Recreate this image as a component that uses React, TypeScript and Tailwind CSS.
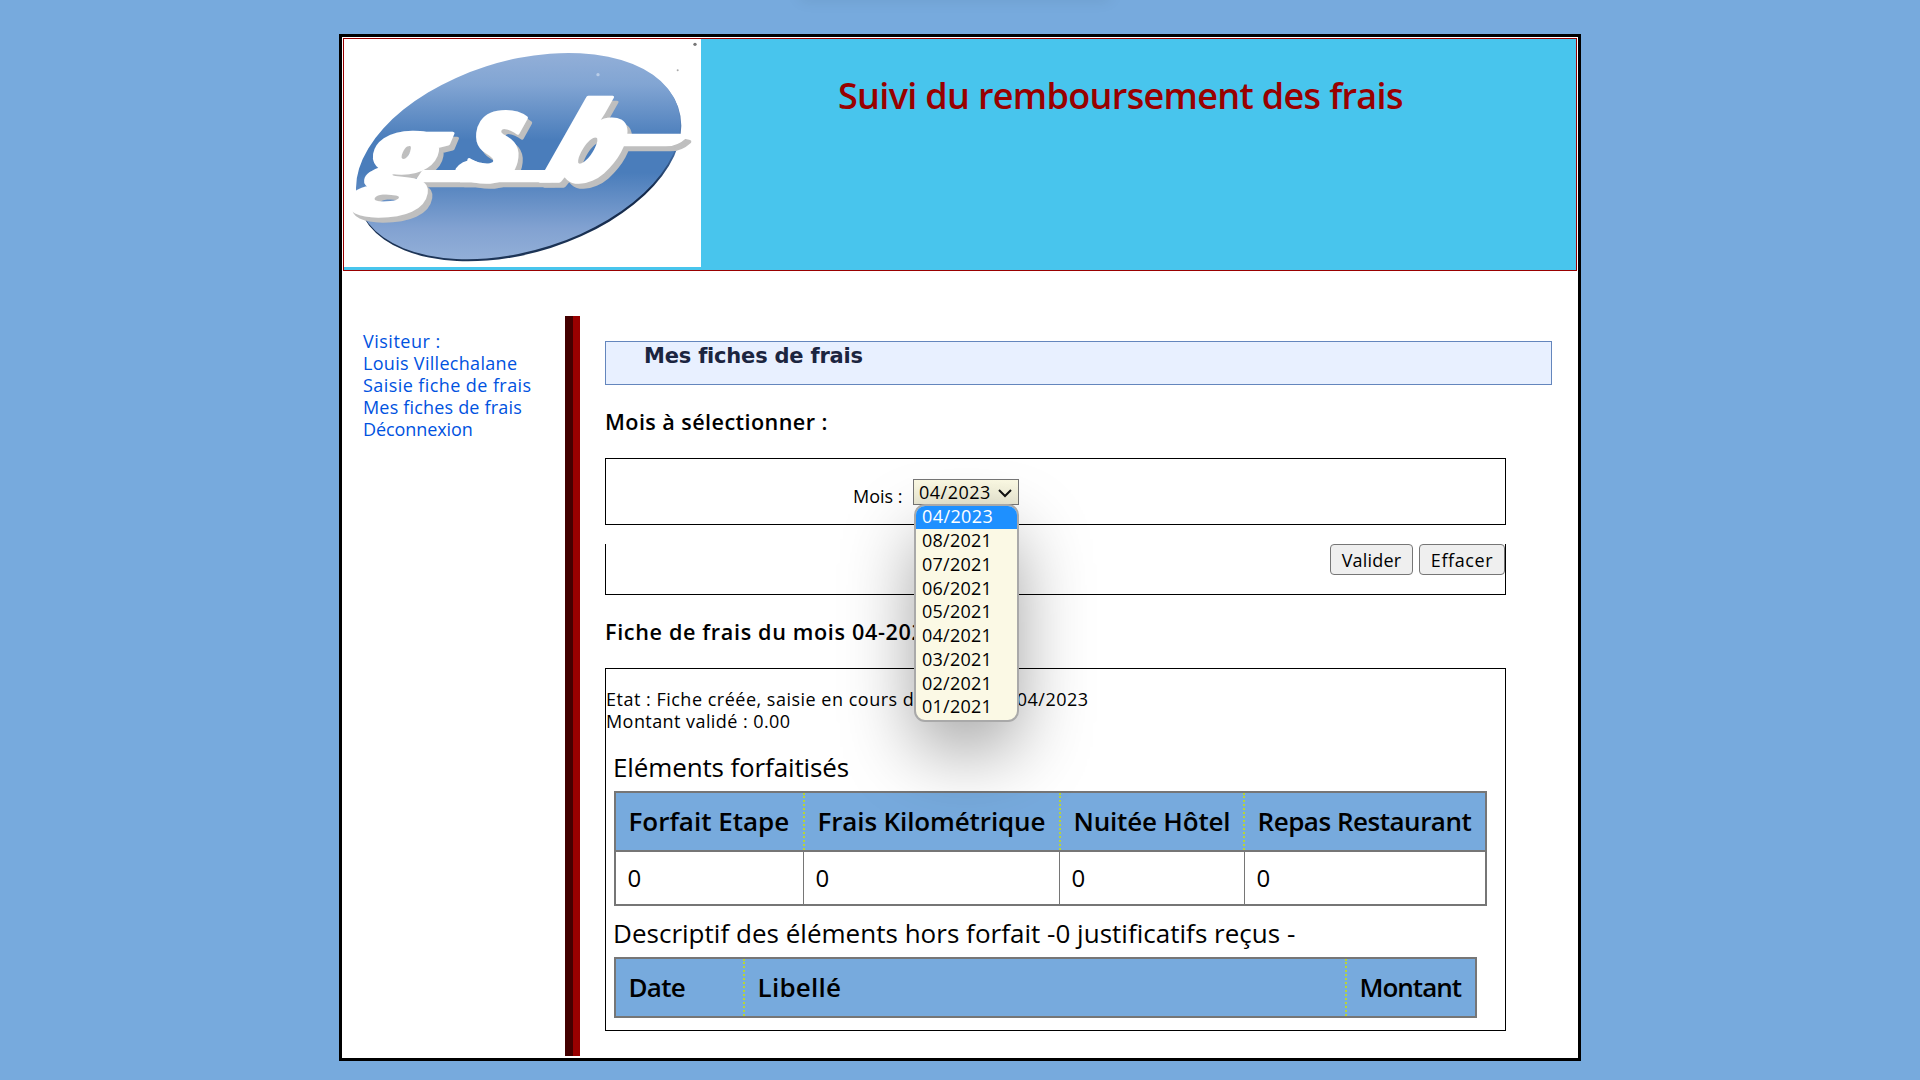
const months = [
  "04/2023",
  "08/2021",
  "07/2021",
  "06/2021",
  "05/2021",
  "04/2021",
  "03/2021",
  "02/2021",
  "01/2021",
];

const links = [
  { label: "Visiteur :", tracking: "tracking-[0.5px]" },
  { label: "Louis Villechalane", tracking: "tracking-[0.3px]" },
  { label: "Saisie fiche de frais", tracking: "tracking-[0.42px]" },
  { label: "Mes fiches de frais", tracking: "tracking-[0.18px]" },
  { label: "Déconnexion", tracking: "tracking-[-0.08px]" },
];

const forfait = [
  { label: "Forfait Etape", tracking: "tracking-[0px]" },
  { label: "Frais Kilométrique", tracking: "tracking-[-0.12px]" },
  { label: "Nuitée Hôtel", tracking: "tracking-[-0.18px]" },
  { label: "Repas Restaurant", tracking: "tracking-[-0.48px]" },
];

const horsForfait = [
  { label: "Date", tracking: "tracking-[-0.7px]" },
  { label: "Libellé", tracking: "tracking-[0.25px]" },
  { label: "Montant", tracking: "tracking-[-1px]" },
];

function LogoLetters({ color }: { color: string }) {
  return (
    <g
      fill={color}
      stroke={color}
      strokeWidth="10"
      strokeLinejoin="round"
      fontFamily="'Open Sans', sans-serif"
      fontWeight="800"
      fontStyle="italic"
    >
      <text transform="translate(88 512) skewX(-9) scale(1.32 1)" fontSize="312">g</text>
      <text transform="translate(405 482) skewX(-6) scale(0.92 1)" fontSize="370">s</text>
      <text transform="translate(628 482) skewX(-18) scale(1.15 1)" fontSize="330">b</text>
      <path d="M280 455H660V482H262Z" />
      <path d="M392 482Q372 468 382 448Q400 424 430 426Q455 436 490 460V482Z" />
      <path d="M820 346H1050L1066 350Q1040 374 1008 374H840Z" />
    </g>
  );
}

function Logo() {
  const oval = "M80 508A501.5 286 -16.9 1 1 1054 314A501.5 286 -16.9 1 1 80 508Z";
  return (
    <svg className="block h-[228px] w-[357px] bg-white" viewBox="42 57 1071 684" preserveAspectRatio="none">
      <defs>
        <linearGradient id="oval" gradientUnits="userSpaceOnUse" x1="0" y1="101" x2="0" y2="722">
          <stop offset="0" stopColor="#92afd8" />
          <stop offset="0.15" stopColor="#82a5d3" />
          <stop offset="0.42" stopColor="#4a7dbb" />
          <stop offset="0.58" stopColor="#4a7dbb" />
          <stop offset="0.85" stopColor="#82a2d1" />
          <stop offset="1" stopColor="#92afd8" />
        </linearGradient>
        <linearGradient id="edge" gradientUnits="userSpaceOnUse" x1="0" y1="101" x2="0" y2="722">
          <stop offset="0" stopColor="#7d9cc7" />
          <stop offset="0.45" stopColor="#4673ad" />
          <stop offset="0.65" stopColor="#14294a" />
          <stop offset="1" stopColor="#1d3557" />
        </linearGradient>
      </defs>
      <g transform="translate(0 3)">
        <path d={oval} fill="url(#edge)" />
        <path d={oval} fill="url(#oval)" transform="translate(-2 -5) scale(0.999 0.998)" />
      </g>
      <circle cx="804" cy="164" r="5" fill="#b9cde8" />
      <circle cx="1095" cy="73" r="5" fill="#777" />
      <circle cx="1043" cy="151" r="3" fill="#aaa" />
      <g transform="translate(13 15)">
        <LogoLetters color="#bfbfbf" />
      </g>
      <LogoLetters color="#ffffff" />
    </svg>
  );
}

function MonthSelect() {
  return (
    <div className="relative mt-5 h-[26px] w-[106px] border border-[#767676] bg-linear-to-b from-[#fcfae4] to-[#ebe9d4] pl-[5px]">
      <span className="block leading-[24px] tracking-[0.5px]">04/2023</span>
      <svg className="absolute top-[9px] right-[6px] h-[9px] w-[14px]" viewBox="0 0 14 9" fill="none" stroke="#111" strokeWidth="2">
        <path d="M1 1L7 7L13 1" />
      </svg>
      <ul className="absolute top-[24px] left-0 z-10 h-[218px] w-[105px] overflow-hidden rounded-[11px] border-2 border-[#a9a9a9] bg-[#fbf9e5] shadow-[0_30px_75px_-4px_rgba(0,0,0,0.4)]">
        {months.map((m, i) => (
          <li
            key={m}
            className={
              i === 0
                ? "h-[23px] bg-[#1e90ff] pl-[6px] leading-[20px] tracking-[0.4px] text-white"
                : "h-[23.75px] pl-[6px] leading-[23px] tracking-[0.25px]"
            }
          >
            {m}
          </li>
        ))}
      </ul>
    </div>
  );
}

export default function App() {
  return (
    <div className="relative h-[1080px] w-[1920px] overflow-hidden bg-[#77aadd] pt-[34px] font-['Open_Sans',sans-serif] text-[18px] leading-[22px] text-black">
      <div className="absolute -top-5 left-[800px] h-4 w-[310px] shadow-[0_4px_16px_rgba(0,0,0,0.08)]" />
      <div className="ml-[339px] h-[1027px] w-[1242px] border-[3px] border-black bg-white p-px">
        <header className="flex h-[233px] border border-[#990000] bg-[#48c5ed]">
          <Logo />
          <h1 className="ml-[137px] mt-[32px] text-[36px] leading-[50px] font-semibold tracking-[-0.67px] whitespace-nowrap text-[#990000]">
            Suivi du remboursement des frais
          </h1>
        </header>

        <div className="mt-[45px] flex h-[740px]">
          <nav className="w-[222px] pt-[14px] pl-5 text-[#0052e0]">
            {links.map((l) => (
              <div key={l.label} className={l.tracking}>
                {l.label}
              </div>
            ))}
          </nav>
          <div className="w-[15px] border-l-8 border-[#440000] bg-[#990000]" />

          <main className="ml-[25px] pt-[25px]">
            <h2 className="h-[44px] w-[947px] border border-[#6486bd] bg-[#e8f0ff] pt-[3px] pl-[38px] font-['DejaVu_Sans',sans-serif] text-[21px] font-bold tracking-[-0.2px] text-[#1b2540]">
              Mes fiches de frais
            </h2>

            <h3 className="mt-6 text-[21.6px] leading-[26px] font-semibold tracking-[0.42px]">
              Mois à sélectionner :
            </h3>
            <div className="mt-[23px] flex h-[67px] w-[901px] border border-black pl-[247px]">
              <label className="mt-[26px] w-[60px]">Mois :</label>
              <MonthSelect />
            </div>
            <div className="mt-[19px] flex h-[51px] w-[901px] items-start justify-end gap-[6px] border-x border-b border-black">
              <button className="h-[31px] w-[83px] rounded-[4px] border border-[#767676] bg-[#efefef] tracking-[0.2px]">Valider</button>
              <button className="h-[31px] w-[86px] rounded-[4px] border border-[#767676] bg-[#efefef] tracking-[0.6px]">Effacer</button>
            </div>

            <h3 className="mt-6 text-[21.6px] leading-[26px] font-semibold tracking-[0.65px]">
              Fiche de frais du mois 04-2023 :
            </h3>
            <section className="mt-[23px] h-[363px] w-[901px] border border-black pt-[19px]">
              <p className="tracking-[0.5px]">Etat : Fiche créée, saisie en cours depuis le 07/04/2023</p>
              <p className="tracking-[0.43px]">Montant validé : 0.00</p>

              <p className="mt-[17px] pl-[7px] text-[26px] leading-9 tracking-[-0.13px]">Eléments forfaitisés</p>
              <div className="mt-[6px] ml-2 h-[115px] w-[873px] border-2 border-[#767676]">
                <div className="grid h-[59px] grid-cols-[189px_256px_184px_240px] border-b-2 border-[#767676] bg-[#77aadd]">
                  {forfait.map((c) => (
                    <div
                      key={c.label}
                      className="border-r-2 border-dotted border-[#b7d43a] pl-[12.5px] text-[26px] leading-[56px] font-semibold whitespace-nowrap last:border-r-0"
                    >
                      <span className={c.tracking}>{c.label}</span>
                    </div>
                  ))}
                </div>
                <div className="grid h-[52px] grid-cols-[188px_256px_185px_240px]">
                  {forfait.map((c) => (
                    <div
                      key={c.label}
                      className="border-r border-[#767676] pl-[11.5px] text-[24px] leading-[52px] last:border-r-0"
                    >
                      0
                    </div>
                  ))}
                </div>
              </div>

              <p className="mt-[9px] pl-[7px] text-[26px] leading-9 tracking-[0.02px]">
                Descriptif des éléments hors forfait -0 justificatifs reçus -
              </p>
              <div className="mt-[6px] ml-2 grid h-[61px] w-[863px] grid-cols-[129px_602px_128px] border-2 border-[#767676] bg-[#77aadd]">
                {horsForfait.map((c) => (
                  <div
                    key={c.label}
                    className="border-r-2 border-dotted border-[#b7d43a] pl-[12.5px] text-[26px] leading-[56px] font-semibold last:border-r-0"
                  >
                    <span className={c.tracking}>{c.label}</span>
                  </div>
                ))}
              </div>
            </section>
          </main>
        </div>
      </div>
    </div>
  );
}
